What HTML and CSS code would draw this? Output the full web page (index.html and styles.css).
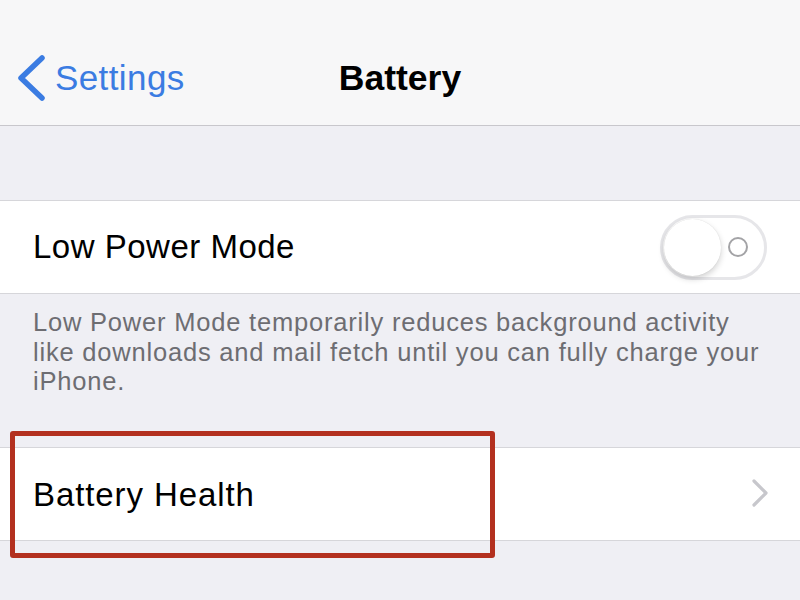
FILE: index.html
```html
<!DOCTYPE html>
<html>
<head>
<meta charset="utf-8">
<link rel="stylesheet" href="styles.css">
</head>
<body>
<header class="nav">
  <a class="back">
    <svg class="back-icon" width="30" height="46" viewBox="0 0 30 46"><path d="M26 3 L5 23 L26 43" fill="none" stroke="#3b7ce2" stroke-width="5.5" stroke-linecap="round" stroke-linejoin="round"/></svg>
    <span class="back-label">Settings</span>
  </a>
  <h1 class="title">Battery</h1>
  <div class="nav-side"></div>
</header>
<div class="gap"></div>
<section class="cell">
  <span class="cell-label">Low Power Mode</span>
  <div class="switch">
    <div class="knob"></div>
    <div class="off-mark"></div>
  </div>
</section>
<p class="footer">Low Power Mode temporarily reduces background activity<br>like downloads and mail fetch until you can fully charge your<br>iPhone.</p>
<section class="cell cell-link">
  <span class="cell-label label-wide">Battery Health</span>
  <svg class="chevron" width="18" height="28" viewBox="0 0 18 28"><path d="M3 2 L15 14 L3 26" fill="none" stroke="#c7c7cc" stroke-width="3.2" stroke-linecap="round" stroke-linejoin="round"/></svg>
  <div class="highlight"></div>
</section>
</body>
</html>
```
FILE: styles.css
```css
html, body {
  margin: 0;
  padding: 0;
}
body {
  background: #efeff4;
  font-family: "Liberation Sans", Arial, sans-serif;
  width: 800px;
  height: 600px;
  overflow: hidden;
}
.nav {
  height: 126px;
  background: #f7f7f8;
  border-bottom: 1px solid #c8c7cc;
  display: grid;
  grid-template-columns: 1fr auto 1fr;
  align-items: center;
  padding-top: 31px;
  box-sizing: border-box;
}
.back {
  display: flex;
  align-items: center;
  padding-left: 16px;
  color: #3b7ce2;
}
.back-icon {
  display: block;
}
.back-label {
  font-size: 35px;
  margin-left: 9px;
  letter-spacing: 0.4px;
}
.title {
  margin: 0;
  font-size: 35.5px;
  font-weight: bold;
  color: #000;
}
.gap {
  height: 74px;
}
.cell {
  background: #fff;
  border-top: 1px solid #d6d6da;
  border-bottom: 1px solid #d6d6da;
  height: 94px;
  box-sizing: border-box;
  display: flex;
  align-items: center;
  justify-content: space-between;
  padding: 0 33px;
  position: relative;
}
.cell-label {
  font-size: 33px;
  color: #000;
  letter-spacing: 0.5px;
}
.label-wide {
  letter-spacing: 0.9px;
  margin-top: 2px;
}
.switch {
  width: 107px;
  height: 65px;
  box-sizing: border-box;
  border: 3px solid #e6e6e9;
  border-radius: 33px;
  display: flex;
  align-items: center;
  justify-content: space-between;
  padding: 0 16px 0 1px;
  background: #fff;
}
.knob {
  width: 57px;
  height: 57px;
  border-radius: 50%;
  background: #fff;
  box-shadow: 0 3px 6px rgba(0,0,0,0.18), 0 0 1px rgba(0,0,0,0.15);
}
.off-mark {
  width: 16px;
  height: 16px;
  border: 2.5px solid #a3a3a6;
  border-radius: 50%;
}
.footer {
  margin: 0;
  padding: 14px 33px 0;
  height: 153px;
  box-sizing: border-box;
  font-size: 25.5px;
  line-height: 29.5px;
  color: #6d6d72;
  letter-spacing: 0.8px;
  white-space: nowrap;
}
.cell-link {
  padding-right: 31px;
}
.chevron {
  display: block;
  margin-top: -2px;
}
.highlight {
  position: absolute;
  left: 10px;
  top: -17px;
  width: 485px;
  height: 127px;
  box-sizing: border-box;
  border: 5px solid #b3301f;
  border-radius: 3px;
}
```
